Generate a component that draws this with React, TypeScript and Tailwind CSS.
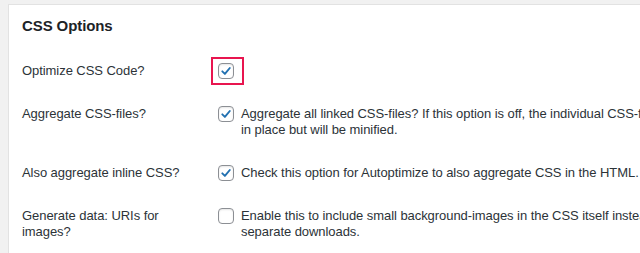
import React from "react";

function Box({ checked }: { checked: boolean }) {
  return (
    <span className="flex h-[16px] w-[16px] shrink-0 items-center justify-center rounded-[4px] border border-[#8c8f94] bg-white shadow-[inset_0_1px_2px_rgba(0,0,0,0.1)]">
      {checked && (
        <svg width="12" height="12" viewBox="0 0 12 12" fill="none">
          <path d="M2.3 6.3 L4.9 8.9 L9.8 3" stroke="#2271b1" strokeWidth="1.9" strokeLinecap="round" strokeLinejoin="round" />
        </svg>
      )}
    </span>
  );
}

type Row = { label: string[]; checked: boolean; desc: string[]; highlight?: boolean };

const rows: Row[] = [
  { label: ["Optimize CSS Code?"], checked: true, desc: [], highlight: true },
  {
    label: ["Aggregate CSS-files?"],
    checked: true,
    desc: [
      "Aggregate all linked CSS-files? If this option is off, the individual CSS-files will remain",
      "in place but will be minified.",
    ],
  },
  {
    label: ["Also aggregate inline CSS?"],
    checked: true,
    desc: ["Check this option for Autoptimize to also aggregate CSS in the HTML."],
  },
  {
    label: ["Generate data: URIs for", "images?"],
    checked: false,
    desc: [
      "Enable this to include small background-images in the CSS itself instead of as",
      "separate downloads.",
    ],
  },
];

export default function App() {
  return (
    <div
      className="h-[253px] w-[640px] overflow-hidden bg-[#f1f1f1] pl-[8px] pt-[4px] text-[#1d2327]"
      style={{ fontFamily: '"Liberation Sans", Arial, sans-serif' }}
    >
      <div className="w-[900px] h-[300px] border border-[#e2e2e2] bg-white pl-[13px] pt-[11px]">
        <h2 className="text-[15px] font-bold leading-[20px] tracking-[-0.1px] text-[#1d2327]">CSS Options</h2>
        <div className="mt-[13px] flex flex-col">
          {rows.map((r, i) => (
            <div key={i} className="flex pt-[14px] pb-[13px] text-[13px] leading-[16px] tracking-[-0.06px] text-[#2c3338]">
              <div className="w-[196px] shrink-0">
                {r.label.map((l, j) => (
                  <div key={j} className="whitespace-nowrap">{l}</div>
                ))}
              </div>
              <div className="flex gap-[7px]">
                <div className="relative h-[16px]">
                  <Box checked={r.checked} />
                  {r.highlight && (
                    <span className="absolute left-[-7px] top-[-6px] h-[28px] w-[33px] border-2 border-[#e8154f]" />
                  )}
                </div>
                <div>
                  {r.desc.map((d, j) => (
                    <div key={j} className="whitespace-nowrap">{d}</div>
                  ))}
                </div>
              </div>
            </div>
          ))}
        </div>
      </div>
    </div>
  );
}
